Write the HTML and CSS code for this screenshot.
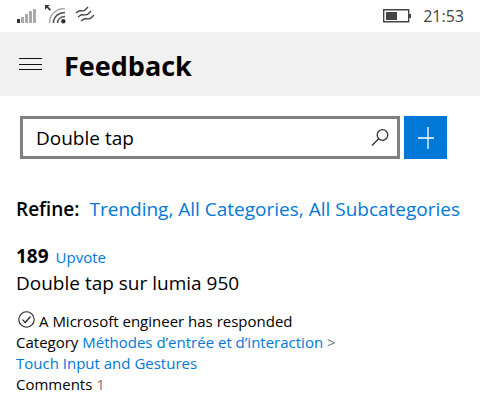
FILE: index.html
```html
<!DOCTYPE html>
<html lang="en">

<head>
    <meta charset="UTF-8">
    <meta name="viewport" content="width=device-width, initial-scale=1.0">
    <title>Feedback</title>
    <link rel="stylesheet" href="styles.css">
</head>

<body>
    <!-- Status bar -->
    <div class="status-bar">
        <svg class="status-icons" width="80" height="24" viewBox="0 0 80 24" aria-hidden="true">
            <!-- signal -->
            <path d="M1 15h3v4h-3z" fill="#333"/>
            <path d="M5 13h3v6h-3zM9 10h3v9h-3zM13 7h3v12h-3zM17 5h3v14h-3z" fill="#aaa"/>
            <!-- wifi -->
            <path d="M29 1h5l-2 1.6 3 3-1.2 1.2-3-3L29 6z" fill="#333"/>
            <path d="M33.5 19C33.5 10.5 40 4.5 49 4.5" fill="none" stroke="#aaa" stroke-width="1.5"/>
            <path d="M37.5 19C37.5 12.5 42.5 8.5 49 8.5M41.5 19C41.5 15 45 12.5 49 12.5" fill="none" stroke="#555" stroke-width="1.6"/>
            <circle cx="47.3" cy="17.3" r="2.2" fill="#333"/>
            <!-- vibrate -->
            <path d="M60 9L63 7C66 6 67 8 69 6L72 3M62 13L65 11C68 10 70 12 72 10L75 7M65 17L68 15C71 14 73 16 75 14L78 11" fill="none" stroke="#444" stroke-width="1.4"/>
        </svg>
        <div class="status-right">
            <svg width="28" height="14" viewBox="0 0 28 14" aria-hidden="true">
                <path d="M.7.7h25v12h-25z" fill="none" stroke="#444" stroke-width="1.4"/>
                <path d="M3 3h11v8h-11z" fill="#444"/>
                <path d="M26 5h2v4h-2z" fill="#444"/>
            </svg>
            <span class="clock">21:53</span>
        </div>
    </div>

    <header class="header">
        <button class="menu-button" aria-label="Menu">
            <svg width="24" height="14" viewBox="0 0 24 14" aria-hidden="true">
                <path d="M1 1.5h23M1 7.5h23M1 12.5h23" stroke="#111" stroke-width="1.1"/>
            </svg>
        </button>
        <h1>Feedback</h1>
    </header>

    <main>
        <form class="search">
            <div class="search-box">
                <input type="text" value="Double tap" aria-label="Search feedback">
                <button type="submit" class="search-button" aria-label="Search">
                    <svg width="18" height="18" viewBox="0 0 18 18" aria-hidden="true">
                        <circle cx="11.5" cy="6" r="5.3" fill="none" stroke="#333" stroke-width="1.3"/>
                        <path d="M7.7 9.8L1 16.5" stroke="#333" stroke-width="1.4"/>
                    </svg>
                </button>
            </div>
            <button type="button" class="add-button" aria-label="Add feedback">
                <svg width="22" height="22" viewBox="0 0 22 22" aria-hidden="true">
                    <path d="M3 11h16M13 0v22" stroke="#fff" stroke-width="1.3"/>
                </svg>
            </button>
        </form>

        <div class="refine">
            <strong>Refine:</strong>
            <a href="#">Trending, All Categories, All Subcategories</a>
        </div>

        <article class="item">
            <div class="votes"><strong>189</strong><a href="#">Upvote</a></div>
            <h2>Double tap sur lumia 950</h2>
            <div class="details">
                <div class="response">
                    <svg width="17" height="17" viewBox="0 0 17 17" aria-hidden="true">
                        <circle cx="8.5" cy="8.5" r="7.7" fill="none" stroke="#222" stroke-width="1.1"/>
                        <path d="M4.5 8.7L7.3 11.5L12.5 5.5" fill="none" stroke="#222" stroke-width="1.2"/>
                    </svg>
                    <span>A Microsoft engineer has responded</span>
                </div>
                <div>Category <a href="#">Méthodes d’entrée et d’interaction</a> <span class="muted">&gt;</span></div>
                <div><a href="#">Touch Input and Gestures</a></div>
                <div>Comments <span class="muted">1</span></div>
            </div>
        </article>
    </main>
</body>

</html>
```
FILE: styles.css
```css
* {
    box-sizing: border-box;
}

body {
    margin: 0;
    font-family: "Segoe UI", "Open Sans", "Noto Sans", sans-serif;
    background: #fff;
    color: #000;
}

a {
    color: #0078d7;
    text-decoration: none;
}

button {
    padding: 0;
    border: none;
    background: none;
    cursor: pointer;
}

svg {
    display: block;
    flex: none;
}

/* Status bar */
.status-bar {
    display: flex;
    justify-content: space-between;
    align-items: center;
    height: 32px;
    padding: 0 16px;
}

.status-right {
    display: flex;
    align-items: center;
    gap: 12px;
}

.clock {
    font-size: 16px;
    color: #444;
}

/* Page header */
.header {
    display: flex;
    align-items: center;
    gap: 22px;
    height: 64px;
    padding: 0 18px;
    background: #f1f1f1;
}

h1 {
    margin: 0;
    padding-top: 4px;
    font-size: 27px;
    line-height: 40px;
}

/* Search */
.search {
    display: flex;
    gap: 4px;
    padding: 20px 33px 0 20px;
}

.search-box {
    display: flex;
    flex: 1;
    align-items: center;
    height: 43px;
    padding-right: 8px;
    border: 3px solid #808080;
}

.search-box input {
    flex: 1;
    min-width: 0;
    padding: 0 13px;
    border: none;
    outline: none;
    background: none;
    font: inherit;
    font-size: 19px;
}

.add-button {
    display: grid;
    place-items: center;
    width: 43px;
    height: 43px;
    background: #0078d7;
}

/* Filters */
.refine {
    display: flex;
    gap: 10px;
    padding: 36px 16px 0;
    font-size: 19px;
    line-height: 28px;
    white-space: nowrap;
}

.refine strong {
    font-weight: 600;
}

/* Feedback entry */
.item {
    padding: 20px 16px;
}

.votes {
    display: flex;
    align-items: baseline;
    gap: 7px;
    line-height: 26px;
    font-size: 15px;
}

.votes strong {
    font-size: 19px;
}

h2 {
    margin: 0;
    font-size: 19px;
    font-weight: 400;
    line-height: 26px;
}

.details {
    margin-top: 15px;
    font-size: 15px;
    line-height: 21px;
}

.response {
    display: flex;
    gap: 4px;
    padding-left: 2px;
}

.muted {
    color: #777;
}
```
